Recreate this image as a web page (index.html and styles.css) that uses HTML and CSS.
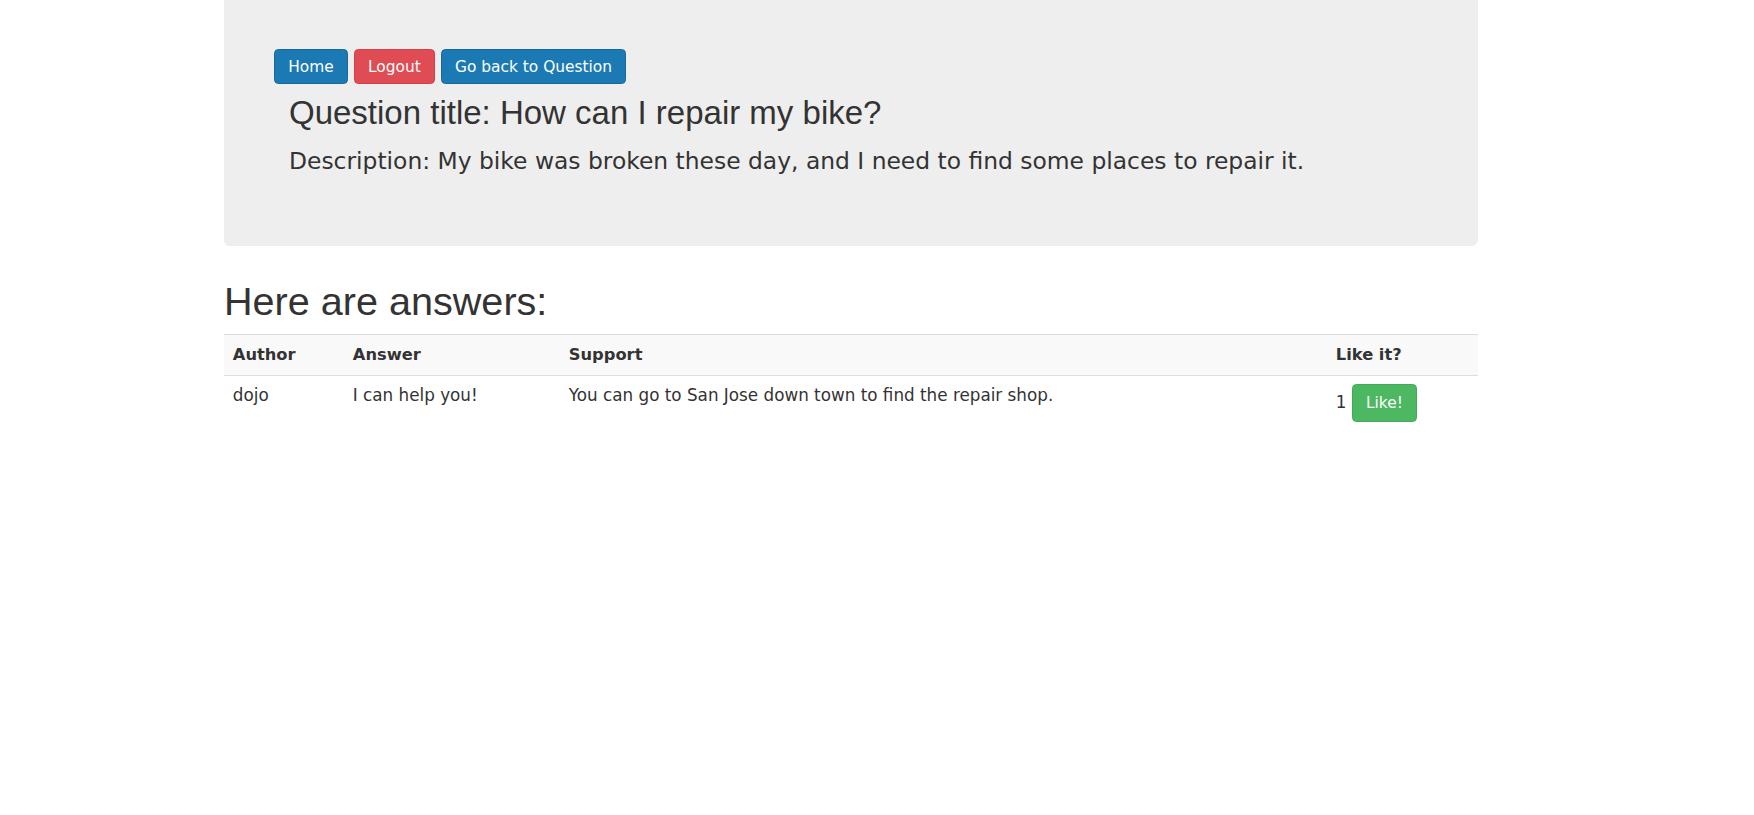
FILE: index.html
```html
<!DOCTYPE html>
<html lang="en">
<head>
<meta charset="utf-8">
<title>Answers</title>
<link rel="stylesheet" href="styles.css">
</head>
<body>
<div class="page">
  <div class="jumbotron">
    <div class="nav-buttons">
      <a class="btn btn-primary" href="#">Home</a>
      <a class="btn btn-danger" href="#">Logout</a>
      <a class="btn btn-primary" href="#">Go back to Question</a>
    </div>
    <div class="question">
      <h2 class="question-title">Question title: How can I repair my bike?</h2>
      <p class="question-desc">Description: My bike was broken these day, and I need to find some places to repair it.</p>
    </div>
  </div>

  <h1 class="answers-heading">Here are answers:</h1>
  <table class="answers">
    <colgroup>
      <col class="col-author">
      <col class="col-answer">
      <col class="col-support">
      <col class="col-like">
    </colgroup>
    <thead>
      <tr>
        <th>Author</th>
        <th>Answer</th>
        <th>Support</th>
        <th>Like it?</th>
      </tr>
    </thead>
    <tbody>
      <tr>
        <td>dojo</td>
        <td>I can help you!</td>
        <td>You can go to San Jose down town to find the repair shop.</td>
        <td>1 <a class="btn btn-success btn-like" href="#">Like!</a></td>
      </tr>
    </tbody>
  </table>
</div>
</body>
</html>
```

FILE: styles.css
```css
html, body {
  margin: 0;
  padding: 0;
  background: #ffffff;
}

body {
  font-family: "DejaVu Sans", Verdana, sans-serif;
  font-size: 15.4px;
  line-height: 22px;
  color: #333333;
}

.page {
  width: 1254px;
  margin: 0 0 0 224px;
}

.jumbotron {
  background: #eeeeee;
  border-radius: 0 0 6px 6px;
  padding: 49px 0 0 50px;
  height: 197px;
}

.nav-buttons {
  display: flex;
  gap: 6px;
}

.btn {
  display: inline-block;
  font-family: "DejaVu Sans", Verdana, sans-serif;
  font-size: 15.4px;
  line-height: 22px;
  color: #ffffff;
  text-decoration: none;
  border: 1px solid transparent;
  border-radius: 4.4px;
  padding: 5.6px 13.2px;
  white-space: nowrap;
}

.btn-primary {
  background: #1b7ab4;
  border-color: #17699c;
}

.btn-danger {
  background: #e04c53;
  border-color: #d43f46;
}

.btn-success {
  background: #4db862;
  border-color: #43a857;
}

.btn-like {
  padding: 6.6px 13.2px;
  vertical-align: middle;
}

.question {
  padding-left: 15px;
}

.question-title {
  font-family: "Liberation Sans", Arial, Helvetica, sans-serif;
  font-weight: normal;
  font-size: 33px;
  line-height: 36.3px;
  margin: 11px 0 0 0;
}

.question-desc {
  font-size: 23.4px;
  line-height: 33px;
  margin: 14px 0 0 0;
}

.answers-heading {
  font-family: "Liberation Sans", Arial, Helvetica, sans-serif;
  font-weight: normal;
  font-size: 39.6px;
  line-height: 43.6px;
  margin: 33.5px 0 11px 0;
}

.answers {
  width: 100%;
  border-collapse: collapse;
  table-layout: fixed;
}

.col-author { width: 120px; }
.col-answer { width: 216px; }
.col-support { width: 767px; }
.col-like { width: 151px; }

.answers th,
.answers td {
  text-align: left;
  vertical-align: top;
  padding: 8.8px;
  line-height: 22px;
}

.answers td {
  font-size: 16.8px;
}

.answers th {
  font-size: 16.3px;
  background: #f9f9f9;
  font-weight: bold;
  border-top: 1px solid #dddddd;
  border-bottom: 1px solid #dddddd;
}
```
